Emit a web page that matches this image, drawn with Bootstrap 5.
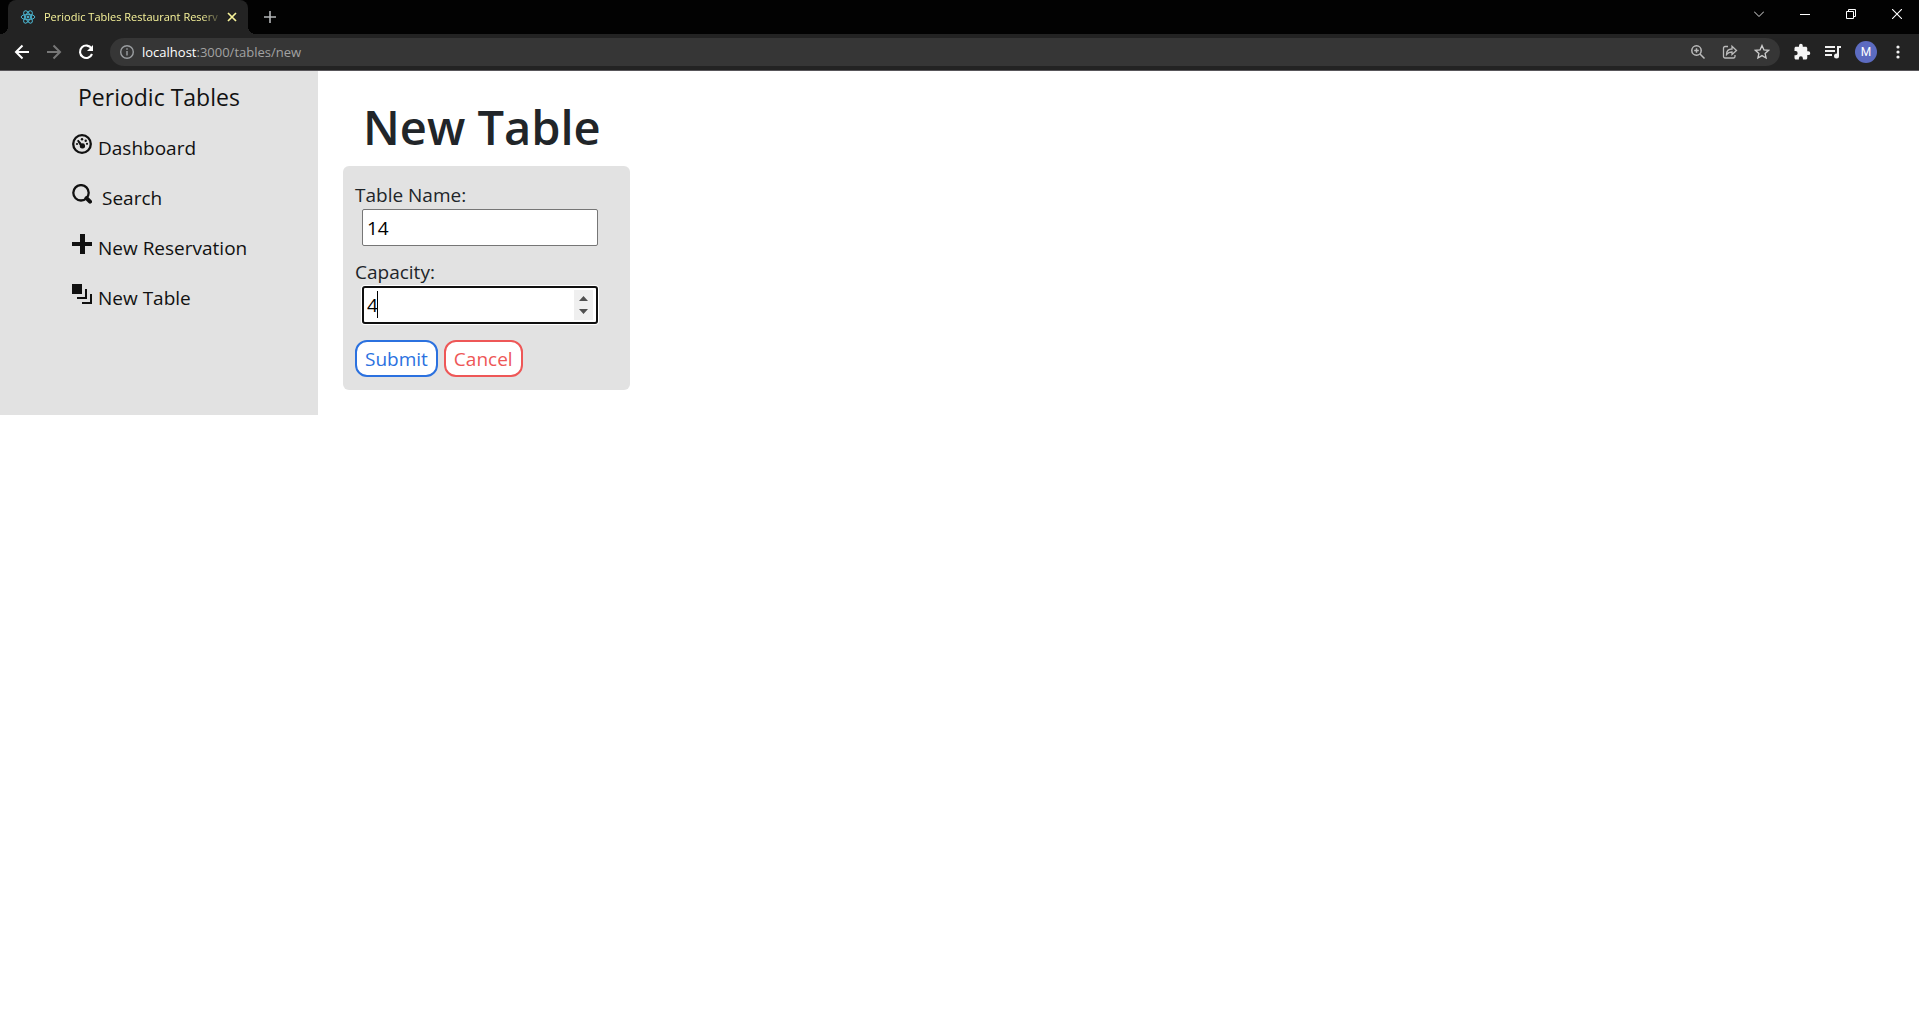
<!DOCTYPE html>
<html lang="en">
<head>
<meta charset="utf-8">
<meta name="viewport" content="width=device-width, initial-scale=1">
<title>Periodic Tables Restaurant Reservation</title>
<link href="https://cdn.jsdelivr.net/npm/bootstrap@5.3.0/dist/css/bootstrap.min.css" rel="stylesheet">
<style>
body{font-family:"Open Sans","Noto Sans",sans-serif;font-size:19px;line-height:30px;font-weight:400;color:#212529;background:#fff}
button{background:none;border:0;padding:0;color:inherit}
svg{display:block;flex:none}
.tabstrip{background:#020202;height:34px;padding-left:8px}
.tab{position:relative;background:#232323;width:240px;height:34px;border-radius:8px 8px 0 0;padding:0 11px 0 12px;color:#f7f39a;font-size:11px}
.tab::before,.tab::after{content:"";position:absolute;bottom:0;width:8px;height:8px}
.tab::before{left:-8px;background:radial-gradient(circle at 0 0,transparent 8px,#232323 8px)}
.tab::after{right:-8px;background:radial-gradient(circle at 100% 0,transparent 8px,#232323 8px)}
.tab-title{flex:1;min-width:0;margin:0 4px 0 8px;white-space:nowrap;-webkit-mask-image:linear-gradient(90deg,#000 88%,transparent)}
.winbtns{margin-right:-1px}
.winbtn{width:46px;height:28px;color:#fff}
.toolbar{background:#232323;height:37px;border-bottom:1px solid #58565a;padding:0 13px 0 12px;color:#f1f1f1}
.nav-icons{gap:12px}
.address{background:#363636;height:28px;border-radius:14px;margin-left:14px;margin-right:13px;padding:0 10px;color:#a9adb0}
.address-icons{gap:16px}
.tool-icons{gap:13px}
.url{font-size:13px;color:#a2a2a2;margin-left:8px}
.url b{font-weight:400;color:#fff}
.avatar{width:22px;height:22px;border-radius:50%;background:#5c6bc0;color:#fff;font:12px/22px Roboto,sans-serif}
.sidebar{background:#e2e2e2;width:318px;min-height:344px;padding:10px 0 0 72px;color:#111}
.brand{font-size:23px;color:#111;margin-left:6px;line-height:32px;text-decoration:none}
.side-list{padding-top:10px}
.side-link{color:#111;text-decoration:none;height:50px;gap:6px}
.side-link svg{margin-bottom:8px}
.content{padding-left:25px}
.page-title{font-size:47px;line-height:60px;font-weight:600;margin:26px 0 9px 20px}
.panel{background:#e2e2e2;width:287px;border-radius:6px;padding:14px 12px 13px}
.panel label{display:block;height:29px}
.field{position:relative;width:236px;margin:0 0 11px 7px}
.field input{display:block;width:100%;height:37px;border:1px solid #767676;border-radius:2px;padding:1px 4px;color:#000;background:#fff;outline:0;-moz-appearance:textfield}
.field input::-webkit-inner-spin-button{-webkit-appearance:none;margin:0}
.field .focused{height:38px;border:2px solid #101010;border-radius:3px;padding:1px 3px;box-shadow:0 0 0 1px #fff}
.spinner{position:absolute;right:5px;top:4px}
.caret{position:absolute;left:15px;top:5px;width:1px;height:27px;background:#000}
.actions{gap:6px;padding-top:5px}
.pill{height:37px;border:2px solid;border-radius:12px;background:#fff;padding:2px 8px 0;font-size:19px;line-height:31px}
.submit{color:#2b71df}
.cancel{color:#ee5757}
</style>
<script src="https://cdn.jsdelivr.net/npm/bootstrap@5.3.0/dist/js/bootstrap.bundle.min.js"></script>
</head>
<body>
<header>
  <div class="tabstrip d-flex align-items-center">
    <div class="tab d-flex align-items-center">
      <svg width="16" height="16" viewBox="0 0 16 16" fill="none" stroke="#4bb5d0" stroke-width="1"><ellipse cx="8" cy="8" rx="6.8" ry="2.7"/><ellipse cx="8" cy="8" rx="6.8" ry="2.7" transform="rotate(60 8 8)"/><ellipse cx="8" cy="8" rx="6.8" ry="2.7" transform="rotate(120 8 8)"/><circle cx="8" cy="8" r="1" fill="#4bb5d0"/></svg>
      <span class="tab-title">Periodic Tables Restaurant Reserv</span>
      <button type="button" aria-label="Close tab"><svg width="10" height="10" viewBox="0 0 10 10" stroke="#f7f39a" stroke-width="1.7"><path d="M1 1l8 8M9 1l-8 8"/></svg></button>
    </div>
    <button type="button" class="ms-3" aria-label="New tab"><svg width="12" height="12" viewBox="0 0 12 12" stroke="#b4b6b8" stroke-width="1.6"><path d="M6 0v12M0 6h12"/></svg></button>
    <div class="winbtns d-flex ms-auto align-self-start">
      <button type="button" class="winbtn d-flex align-items-center justify-content-center" aria-label="Search tabs"><svg width="10" height="6" viewBox="0 0 10 6" fill="none" stroke="#ddd"><path d="M0 .5l5 5 5-5"/></svg></button>
      <button type="button" class="winbtn d-flex align-items-center justify-content-center" aria-label="Minimize"><svg width="10" height="2" viewBox="0 0 10 2" fill="#fff"><path d="M0 1h10v1H0z"/></svg></button>
      <button type="button" class="winbtn d-flex align-items-center justify-content-center" aria-label="Restore"><svg width="10" height="10" viewBox="0 0 10 10" fill="none" stroke="#fff"><path d="M.5 2.500h7v7h-7zM2.500 2.500v-2h7v7h-2"/></svg></button>
      <button type="button" class="winbtn d-flex align-items-center justify-content-center" aria-label="Close"><svg width="10" height="10" viewBox="0 0 10 10" stroke="#fff" stroke-width="1.1"><path d="M0 0l10 10M10 0L0 10"/></svg></button>
    </div>
  </div>
  <div class="toolbar d-flex align-items-center">
    <div class="nav-icons d-flex">
      <button type="button" aria-label="Back"><svg width="20" height="20" viewBox="0 0 20 20" fill="none" stroke="#fff" stroke-width="2"><path d="M17 10H4M10.500 3.500L4 10l6.500 6.500"/></svg></button>
      <button type="button" aria-label="Forward"><svg width="20" height="20" viewBox="0 0 20 20" fill="none" stroke="#777" stroke-width="2"><path d="M3 10h13M9.500 3.500L16 10l-6.500 6.500"/></svg></button>
      <button type="button" aria-label="Reload"><svg width="20" height="20" viewBox="0 0 20 20"><path d="M15.500 6.500A6.200 6.200 0 1 0 16 12" fill="none" stroke="#fff" stroke-width="2.100"/><path d="M17 3v6h-6z" fill="#fff"/></svg></button>
    </div>
    <div class="address d-flex align-items-center flex-grow-1">
      <svg width="14" height="14" viewBox="0 0 14 14" fill="none" stroke="#9b9ea1" stroke-width="1.400"><circle cx="7" cy="7" r="6.300"/><path d="M7 6v4.500M7 3.300v1.500"/></svg>
      <span class="url"><b>localhost</b>:3000/tables/new</span>
      <div class="address-icons d-flex ms-auto">
        <button type="button" aria-label="Zoom"><svg width="16" height="16" viewBox="0 0 16 16" fill="none" stroke="#bbb" stroke-width="1.500"><circle cx="6.500" cy="6.500" r="4.700"/><path d="M10 10l4.500 4.500M6.500 4.200v4.600M4.200 6.500h4.600"/></svg></button>
        <button type="button" aria-label="Share"><svg width="16" height="16" viewBox="0 0 16 16" fill="none" stroke="#bbb" stroke-width="1.300"><path d="M6 2.500H3a1.500 1.500 0 0 0-1.500 1.500v8.500A1.500 1.500 0 0 0 3 14h8.500a1.500 1.500 0 0 0 1.500-1.500V11M4.500 10.500C4.500 7 6.500 5 10 5V2.200L14.500 6.500 10 10.500V8C7.500 8 6 8.500 4.500 10.500z"/></svg></button>
        <button type="button" aria-label="Bookmark"><svg width="16" height="16" viewBox="0 0 16 16" fill="none" stroke="#ccc" stroke-width="1.300"><path d="M8 1.500l1.900 4.300 4.700.5-3.500 3.100 1 4.600L8 11.600 3.900 14l1-4.600-3.500-3.100 4.700-.5z"/></svg></button>
      </div>
    </div>
    <div class="tool-icons d-flex align-items-center">
      <button type="button" aria-label="Extensions"><svg width="18" height="18" viewBox="0 0 24 24" fill="#f5f5f5"><path d="M20.500 11H19V7c0-1.100-.9-2-2-2h-4V3.500a2.500 2.500 0 0 0-5 0V5H4c-1.100 0-2 .9-2 2v3.800h1.500a2.700 2.700 0 0 1 0 5.400H2V20c0 1.100.9 2 2 2h3.800v-1.500a2.700 2.700 0 0 1 5.400 0V22H17c1.100 0 2-.9 2-2v-4h1.500a2.500 2.500 0 0 0 0-5z"/></svg></button>
      <button type="button" aria-label="Media"><svg width="18" height="18" viewBox="0 0 18 18" fill="#f1f1f1"><path d="M1 3h10v2H1zM1 7h10v2H1zM1 11h7v2H1zM13 3h4v2h-2v8h-2z"/><circle cx="12.500" cy="13" r="2.500"/></svg></button>
      <button type="button" class="avatar text-center">M</button>
      <button type="button" aria-label="Menu"><svg width="16" height="16" viewBox="0 0 16 16" fill="#f1f1f1"><circle cx="8" cy="3" r="1.600"/><circle cx="8" cy="8" r="1.600"/><circle cx="8" cy="13" r="1.600"/></svg></button>
    </div>
  </div>
</header>
<div class="d-flex align-items-start">
  <nav class="sidebar flex-shrink-0">
    <a class="brand d-block" href="#">Periodic Tables</a>
    <div class="side-list d-flex flex-column">
      <a class="side-link d-flex align-items-center" href="#"><svg width="20" height="20" viewBox="0 0 20 20"><circle cx="10" cy="10" r="8.800" fill="none" stroke="#111" stroke-width="2.300"/><path d="M5 6.800l1.500-1 3.200 3.600a2.600 2.600 0 1 1-1.800 2z" fill="#111"/><g fill="#111"><circle cx="10" cy="5.300" r="1.200"/><circle cx="13.700" cy="6.700" r="1.200"/><circle cx="15" cy="9.800" r="1.100"/><circle cx="5" cy="10" r="1.100"/></g></svg>Dashboard</a>
      <a class="side-link d-flex align-items-center" href="#"><svg width="20" height="20" viewBox="0 0 20 20" fill="none" stroke="#111"><circle cx="9" cy="8.800" r="7.700" stroke-width="2.300"/><path d="M14.500 14.200l3.500 3.500" stroke-width="4" stroke-linecap="round"/></svg><span class="ps-1">Search</span></a>
      <a class="side-link d-flex align-items-center" href="#"><svg width="20" height="20" viewBox="0 0 20 20" fill="#111"><path d="M8 0h5v8h7v4h-7v8H8v-8H0V8h8z"/></svg>New Reservation</a>
      <a class="side-link d-flex align-items-center" href="#"><svg width="20" height="20" viewBox="0 0 20 20" fill="#111"><path d="M0 0h10v10H0zM13 5h2v10H5v-2h8zM18 10h2v10H10v-2h8z"/></svg>New Table</a>
    </div>
  </nav>
  <main class="content flex-grow-1">
    <h1 class="page-title">New Table</h1>
    <form class="panel">
      <label for="table_name">Table Name:</label>
      <div class="field"><input id="table_name" type="text" value="14"></div>
      <label for="capacity">Capacity:</label>
      <div class="field"><input id="capacity" class="focused" type="number" value="4"><span class="caret"></span><svg class="spinner" width="19" height="30" viewBox="0 0 19 30"><path d="M0 0h19v30H0z" fill="#efefef"/><path d="M5 11l4.500-5 4.500 5zM5 19l4.500 5 4.500-5z" fill="#505050"/></svg></div>
      <div class="actions d-flex"><button type="button" class="pill submit">Submit</button><button type="button" class="pill cancel">Cancel</button></div>
    </form>
  </main>
</div>
</body>
</html>
